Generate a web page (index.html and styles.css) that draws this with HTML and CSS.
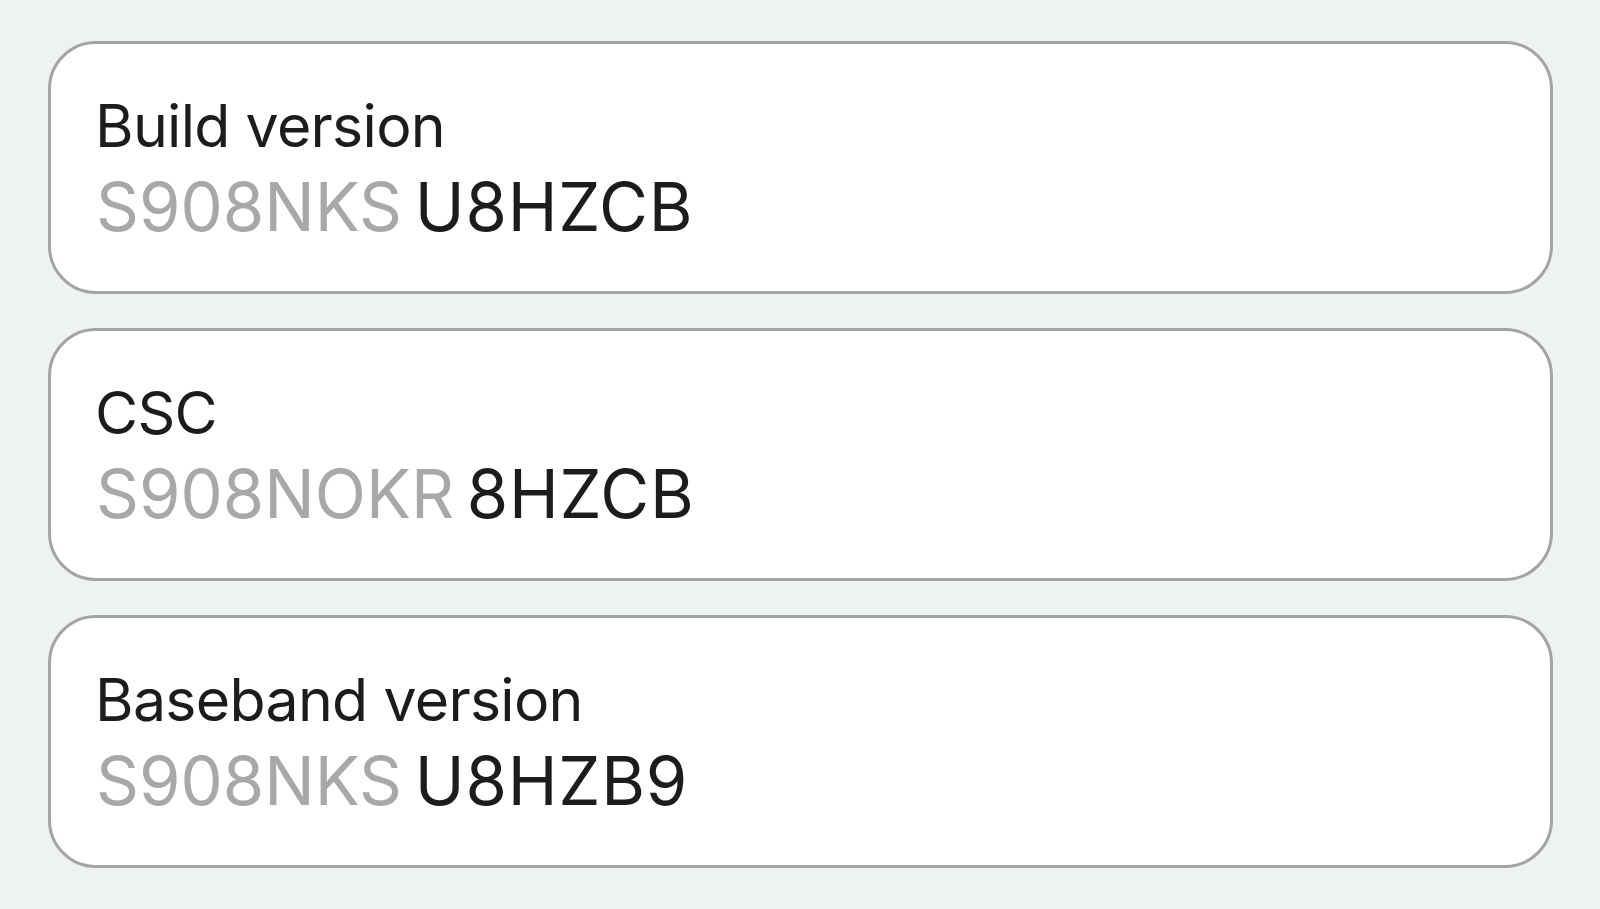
FILE: index.html
```html
<!DOCTYPE html>
<html lang="en">
<head>
  <meta charset="UTF-8" />
  <meta name="viewport" content="width=device-width, initial-scale=1.0"/>
  <title>Software information</title>
  <link rel="stylesheet" href="styles.css">
</head>
<body>
  <div class="list">
    <div class="card">
      <div class="label">Build version</div>
      <div class="value"><span class="dim">S908NKS</span> U8HZCB</div>
    </div>

    <div class="card">
      <div class="label">CSC</div>
      <div class="value"><span class="dim">S908NOKR</span> 8HZCB</div>
    </div>

    <div class="card">
      <div class="label">Baseband version</div>
      <div class="value"><span class="dim">S908NKS</span> U8HZB9</div>
    </div>
  </div>
</body>
</html>
```

FILE: styles.css
```css
* {
  box-sizing: border-box;
}
body {
  margin: 0;
  padding: 41px 47px 0 48px;
  min-height: 100vh;
  background-color: #eef2f3;
  font-family: 'Inter', 'Noto Sans', sans-serif;
  color: #1c1c1c;
}
.list {
  display: flex;
  flex-direction: column;
  gap: 34px;
}
.card {
  height: 253px;
  padding: 52px 40px 0 44px;
  background: #fff;
  border: 3px solid #a4a4a4;
  border-radius: 48px;
}
.label {
  font-size: 59px;
  line-height: 60px;
  letter-spacing: -0.7px;
}
.value {
  margin-top: 16px;
  padding-left: 1px;
  font-size: 67px;
  line-height: 70px;
  letter-spacing: 0.8px;
  word-spacing: -7px;
}
.dim {
  color: #a8a8a8;
  letter-spacing: 0;
}
```
